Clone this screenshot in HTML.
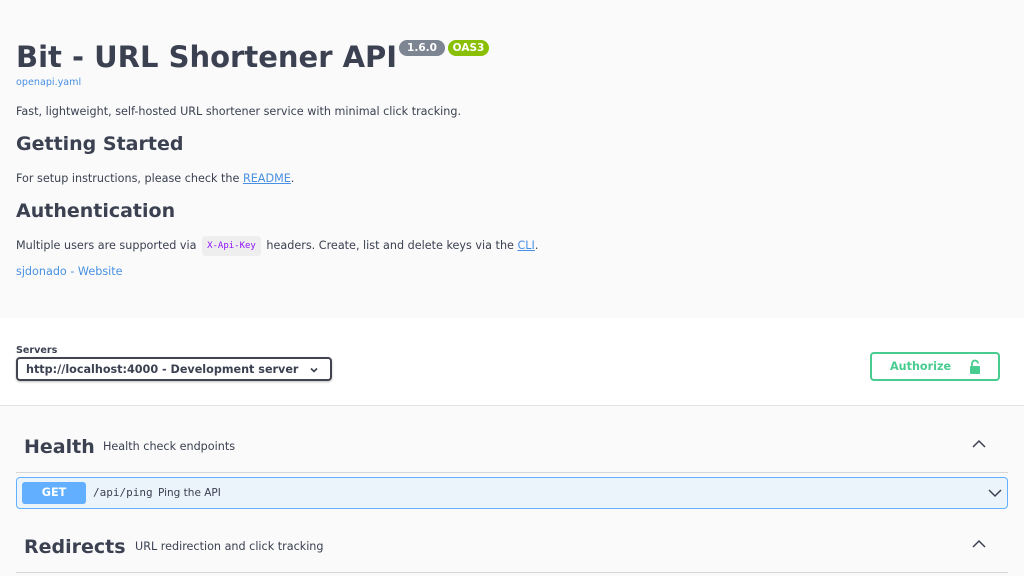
<!DOCTYPE html>
<html><head><meta charset="utf-8"><style>
*{margin:0;padding:0;box-sizing:border-box}
body{width:1024px;height:576px;overflow:hidden;background:#fafafa;font-family:"DejaVu Sans","Liberation Sans",sans-serif;color:#3b4151;position:relative}
.a{position:absolute;white-space:nowrap}
.t{font-size:11.2px;line-height:14px}
a,.lnk{color:#4990e2}
.u{text-decoration:underline}
</style></head><body>
<div class="a" style="left:16px;top:39px;font-size:29px;font-weight:bold;line-height:36px">Bit - URL Shortener API</div>
<div class="a" style="left:399px;top:40px;width:46px;height:16px;border-radius:8px;background:#7d8492;color:#fff;font-size:10.5px;font-weight:bold;text-align:center;line-height:16px">1.6.0</div>
<div class="a" style="left:448px;top:40px;width:41px;height:16px;border-radius:8px;background:#89bf04;color:#fff;font-size:10.5px;font-weight:bold;text-align:center;line-height:16px">OAS3</div>
<div class="a lnk" style="left:16px;top:77px;font-size:9.6px;line-height:12px">openapi.yaml</div>
<div class="a t" style="left:16px;top:105px">Fast, lightweight, self-hosted URL shortener service with minimal click tracking.</div>
<div class="a" style="left:16px;top:132px;font-size:19px;font-weight:bold;line-height:24px">Getting Started</div>
<div class="a t" style="left:16px;top:172px">For setup instructions, please check the <span class="lnk u">README</span>.</div>
<div class="a" style="left:16px;top:199px;font-size:19px;font-weight:bold;line-height:24px">Authentication</div>
<div class="a t" style="left:16px;top:236px">Multiple users are supported via <span style="display:inline-block;background:#eeeeee;border-radius:3px;padding:3px 5px;margin:0 2px;font-family:'DejaVu Sans Mono',monospace;font-size:9px;color:#9012fe;line-height:14px;vertical-align:middle">X-Api-Key</span> headers. Create, list and delete keys via the <span class="lnk u">CLI</span>.</div>
<div class="a t lnk" style="left:16px;top:265px">sjdonado - Website</div>

<div class="a" style="left:0;top:318px;width:1024px;height:88px;background:#fff;border-bottom:1px solid #e4e4e4"></div>
<div class="a" style="left:16px;top:345px;font-size:9.6px;font-weight:bold;line-height:12px">Servers</div>
<div class="a" style="left:16px;top:357px;width:316px;height:24px;border:2px solid #41444e;border-radius:4px;background:#fff;box-shadow:0 1px 2px rgba(0,0,0,.25)">
<span class="a" style="left:8px;top:4px;font-size:11.2px;font-weight:bold;line-height:14px">http://localhost:4000 - Development server</span>
<svg class="a" style="left:291px;top:7px" width="10" height="8" viewBox="0 0 10 8"><path d="M2 2.5 L5 5.5 L8 2.5" fill="none" stroke="#3b4151" stroke-width="1.6"/></svg>
</div>
<div class="a" style="left:870px;top:352px;width:130px;height:29px;border:2px solid #49cc90;border-radius:4px;background:#fff">
<span class="a" style="left:18px;top:6px;font-size:11.2px;font-weight:bold;color:#49cc90;line-height:14px">Authorize</span>
<svg class="a" style="left:96px;top:5px" width="14" height="16" viewBox="0 0 14 16"><path d="M4 7 V4.5 A3 3 0 0 1 10 4.5" fill="none" stroke="#49cc90" stroke-width="1.8"/><rect x="2" y="7" width="10" height="8" rx="1" fill="#49cc90"/></svg>
</div>

<div class="a" style="left:24px;top:435px;font-size:19px;font-weight:bold;line-height:24px">Health</div>
<div class="a t" style="left:103px;top:440px">Health check endpoints</div>
<svg class="a" style="left:971px;top:438px" width="16" height="12" viewBox="0 0 16 12"><path d="M2 9 L8 3 L14 9" fill="none" stroke="#3b4151" stroke-width="1.5"/></svg>
<div class="a" style="left:16px;top:472px;width:992px;height:1px;background:#d6d7d9"></div>
<div class="a" style="left:16px;top:477px;width:992px;height:32px;background:#ebf3fb;border:1px solid #61affe;border-radius:4px">
<div class="a" style="left:5px;top:4px;width:64px;height:22px;background:#61affe;border-radius:3px;color:#fff;font-size:11.2px;font-weight:bold;text-align:center;line-height:22px">GET</div>
<span class="a" style="left:76px;top:8px;font-family:'DejaVu Sans Mono',monospace;font-size:11px;line-height:14px">/api/ping</span>
<span class="a" style="left:141px;top:8px;font-size:10.5px;line-height:14px">Ping the API</span>
<svg class="a" style="left:970px;top:9px" width="16" height="12" viewBox="0 0 16 12"><path d="M2 3 L8 9 L14 3" fill="none" stroke="#3b4151" stroke-width="1.5"/></svg>
</div>
<div class="a" style="left:24px;top:535px;font-size:19px;font-weight:bold;line-height:24px">Redirects</div>
<div class="a t" style="left:135px;top:540px">URL redirection and click tracking</div>
<svg class="a" style="left:971px;top:538px" width="16" height="12" viewBox="0 0 16 12"><path d="M2 9 L8 3 L14 9" fill="none" stroke="#3b4151" stroke-width="1.5"/></svg>
<div class="a" style="left:16px;top:572px;width:992px;height:1px;background:#d6d7d9"></div>
</body></html>
